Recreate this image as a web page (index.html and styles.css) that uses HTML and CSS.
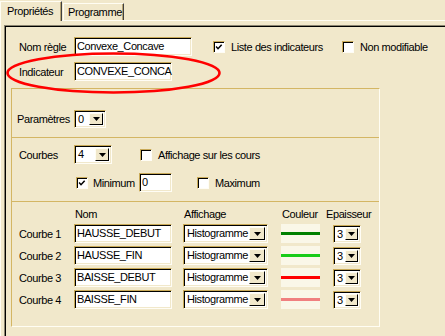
FILE: index.html
```html
<!DOCTYPE html>
<html lang="fr">
<head>
    <meta charset="UTF-8">
    <title>Propriétés</title>
    <link rel="stylesheet" href="styles.css">
</head>
<body>

<div class="tabs">
    <div class="tab active">Propriétés</div>
    <div class="tab">Programme</div>
</div>

<div class="sheet">
    <div class="frame">

        <div class="row first">
            <span class="lbl">Nom règle</span>
            <div class="field w-nom">Convexe_Concave</div>
            <span class="cb checked cb-liste"><svg viewBox="0 0 12 12"><path d="M2.5 5.5 L4.8 8 L9.2 3.2"/></svg></span>
            <span class="cb-text">Liste des indicateurs</span>
            <span class="cb cb-nonmod"></span>
            <span class="cb-text">Non modifiable</span>
        </div>

        <div class="row second">
            <span class="lbl">Indicateur</span>
            <div class="field w-ind">CONVEXE_CONCA</div>
        </div>

        <div class="group">
            <div class="section params">
                <span class="lbl-params">Paramètres</span>
                <div class="combo w-params">
                    <span class="combo-val">0</span>
                    <span class="combo-btn"><svg viewBox="0 0 7 4"><polygon points="0,0 7,0 3.5,4"/></svg></span>
                </div>
            </div>

            <div class="section courbes">
                <div class="row">
                    <span class="lbl">Courbes</span>
                    <div class="combo w-courbes">
                        <span class="combo-val">4</span>
                        <span class="combo-btn"><svg viewBox="0 0 7 4"><polygon points="0,0 7,0 3.5,4"/></svg></span>
                    </div>
                    <span class="cb cb-affich"></span>
                    <span class="cb-text">Affichage sur les cours</span>
                </div>
                <div class="row minmax">
                    <span class="cb checked"><svg viewBox="0 0 12 12"><path d="M2.5 5.5 L4.8 8 L9.2 3.2"/></svg></span>
                    <span class="cb-text lbl-min">Minimum</span>
                    <div class="field w-min">0</div>
                    <span class="cb cb-max"></span>
                    <span class="cb-text">Maximum</span>
                </div>
            </div>

            <div class="section lines">
                <div class="grid">
                    <span></span>
                    <span class="head">Nom</span>
                    <span class="head">Affichage</span>
                    <span class="head">Couleur</span>
                    <span class="head head-ep">Epaisseur</span>

                    <span class="lbl">Courbe 1</span>
                    <div class="field w-name">HAUSSE_DEBUT</div>
                    <div class="combo w-aff"><span class="combo-val">Histogramme</span><span class="combo-btn"><svg viewBox="0 0 7 4"><polygon points="0,0 7,0 3.5,4"/></svg></span></div>
                    <div class="swatch"><span class="stroke" style="background:#008000"></span></div>
                    <div class="combo w-ep"><span class="combo-val">3</span><span class="combo-btn"><svg viewBox="0 0 7 4"><polygon points="0,0 7,0 3.5,4"/></svg></span></div>

                    <span class="lbl">Courbe 2</span>
                    <div class="field w-name">HAUSSE_FIN</div>
                    <div class="combo w-aff"><span class="combo-val">Histogramme</span><span class="combo-btn"><svg viewBox="0 0 7 4"><polygon points="0,0 7,0 3.5,4"/></svg></span></div>
                    <div class="swatch"><span class="stroke" style="background:#18cc18"></span></div>
                    <div class="combo w-ep"><span class="combo-val">3</span><span class="combo-btn"><svg viewBox="0 0 7 4"><polygon points="0,0 7,0 3.5,4"/></svg></span></div>

                    <span class="lbl">Courbe 3</span>
                    <div class="field w-name">BAISSE_DEBUT</div>
                    <div class="combo w-aff"><span class="combo-val">Histogramme</span><span class="combo-btn"><svg viewBox="0 0 7 4"><polygon points="0,0 7,0 3.5,4"/></svg></span></div>
                    <div class="swatch"><span class="stroke" style="background:#ff0000"></span></div>
                    <div class="combo w-ep"><span class="combo-val">3</span><span class="combo-btn"><svg viewBox="0 0 7 4"><polygon points="0,0 7,0 3.5,4"/></svg></span></div>

                    <span class="lbl">Courbe 4</span>
                    <div class="field w-name">BAISSE_FIN</div>
                    <div class="combo w-aff"><span class="combo-val">Histogramme</span><span class="combo-btn"><svg viewBox="0 0 7 4"><polygon points="0,0 7,0 3.5,4"/></svg></span></div>
                    <div class="swatch"><span class="stroke" style="background:#f08080"></span></div>
                    <div class="combo w-ep"><span class="combo-val">3</span><span class="combo-btn"><svg viewBox="0 0 7 4"><polygon points="0,0 7,0 3.5,4"/></svg></span></div>
                </div>
            </div>
        </div>

    </div>
</div>

<svg class="mark" width="445" height="336" viewBox="0 0 445 336">
    <ellipse cx="113.5" cy="73" rx="106" ry="19.5"/>
</svg>

</body>
</html>
```

FILE: styles.css
```css
body {
    margin: 0;
    width: 445px;
    height: 336px;
    overflow: hidden;
    position: relative;
    background-color: #f1e8cb;
    font-family: "Liberation Sans", Arial, sans-serif;
    font-size: 11px;
    letter-spacing: -0.4px;
    color: #000;
}
.tabs {
    display: flex;
    align-items: flex-end;
    height: 20px;
}
.tab {
    box-sizing: border-box;
    height: 17px;
    width: 61px;
    padding: 2px 0 0 4px;
    white-space: nowrap;
    border-top: 1px solid #fffdf3;
    border-left: 1px solid #fffdf3;
    border-right: 1px solid #404040;
    box-shadow: inset -1px 0 #b8a472;
}
.tab.active {
    position: relative;
    z-index: 1;
    height: 20px;
    width: 62px;
    margin-bottom: -1px;
    margin-right: 1px;
    padding: 3px 0 0 6px;
    background-color: #f1e8cb;
}
.sheet {
    border-top: 1px solid #fffdf3;
    border-left: 1px solid #fffdf3;
    padding: 4px 0 0 3px;
}
.frame {
    box-sizing: border-box;
    height: 311px;
    padding: 11px 0 0 6px;
    border-top: 1px solid #8a8470;
    border-left: 1px solid #8a8470;
    box-shadow: inset 1px 1px #000;
}
.row {
    display: flex;
    align-items: center;
    height: 19px;
}
.row.first,
.row.second {
    padding-left: 8px;
}
.row.second {
    margin-top: 6px;
}
.lbl {
    width: 55px;
    flex-shrink: 0;
    white-space: nowrap;
}
.field,
.combo {
    box-sizing: border-box;
    flex-shrink: 0;
    height: 19px;
    background-color: #fff;
    border: 1px solid;
    border-color: #c9aa58 #fffdf5 #fffdf5 #c9aa58;
    box-shadow: inset 1px 1px #000, inset -1px -1px #f1e8cb;
    white-space: nowrap;
}
.field {
    padding: 2px 0 0 2px;
}
.w-nom { width: 118px; }
.w-ind { width: 98px; }
.w-min { width: 33px; margin-left: 1px; }
.w-name { width: 98px; }
.cb {
    box-sizing: border-box;
    width: 12px;
    height: 12px;
    flex-shrink: 0;
    background-color: #fff;
    border: 1px solid;
    border-color: #c9aa58 #fffdf5 #fffdf5 #c9aa58;
    box-shadow: inset 1px 1px #000;
}
.cb svg {
    display: block;
    width: 10px;
    height: 10px;
}
.cb svg path {
    fill: none;
    stroke: #000;
    stroke-width: 1.8;
}
.cb-text {
    margin-left: 6px;
    white-space: nowrap;
}
.cb-liste { margin-left: 21px; }
.cb-nonmod { margin-left: 19px; }
.group {
    box-sizing: border-box;
    width: 369px;
    height: 239px;
    margin-top: 7px;
    border: 1px solid;
    border-color: #d4b664 #fffdf3 #fffdf3 #d4b664;
}
.section {
    border-bottom: 1px solid #d4b664;
}
.section.lines {
    border-bottom: none;
}
.params {
    display: flex;
    align-items: center;
    height: 49px;
    padding-left: 5px;
    box-sizing: border-box;
    padding-top: 12px;
}
.lbl-params {
    width: 57px;
}
.combo {
    display: flex;
    align-items: stretch;
    padding: 2px;
}
.combo-val {
    flex: 1;
    padding: 0 0 0 1px;
    line-height: 13px;
}
.combo-btn {
    box-sizing: border-box;
    width: 14px;
    flex-shrink: 0;
    display: flex;
    align-items: center;
    justify-content: center;
    background-color: #f1e8cb;
    border: 1px solid;
    border-color: #fffdf3 #000 #000 #fffdf3;
}
.combo-btn svg {
    width: 7px;
    height: 4px;
}
.w-params { width: 32px; height: 18px; }
.w-courbes { width: 38px; }
.w-aff { width: 85px; }
.w-ep { width: 28px; height: 18px; }
.w-ep .combo-btn { width: 13px; }
.w-aff .combo-btn { width: 16px; }
.courbes {
    padding: 7px 0 9px 7px;
}
.cb-affich { margin-left: 28px; }
.minmax {
    margin-top: 9px;
    padding-left: 57px;
}
.lbl-min {
    width: 45px;
    margin-left: 5px;
}
.cb-max { margin-left: 25px; }
.lines {
    padding: 5px 0 0 7px;
}
.grid {
    display: grid;
    grid-template-columns: 55px 109px 98px 52px 28px;
    grid-template-rows: 14px repeat(4, 19px);
    row-gap: 3px;
    align-items: center;
}
.head {
    padding-left: 1px;
    white-space: nowrap;
}
.head-ep {
    margin-left: -8px;
}
.swatch {
    display: flex;
    align-items: center;
    width: 39px;
    height: 19px;
    background-color: #faf7e8;
}
.stroke {
    display: block;
    width: 100%;
    height: 3px;
}
.mark {
    position: absolute;
    left: 0;
    top: 0;
    pointer-events: none;
}
.mark ellipse {
    fill: none;
    stroke: #ff0000;
    stroke-width: 2.6;
}
```
